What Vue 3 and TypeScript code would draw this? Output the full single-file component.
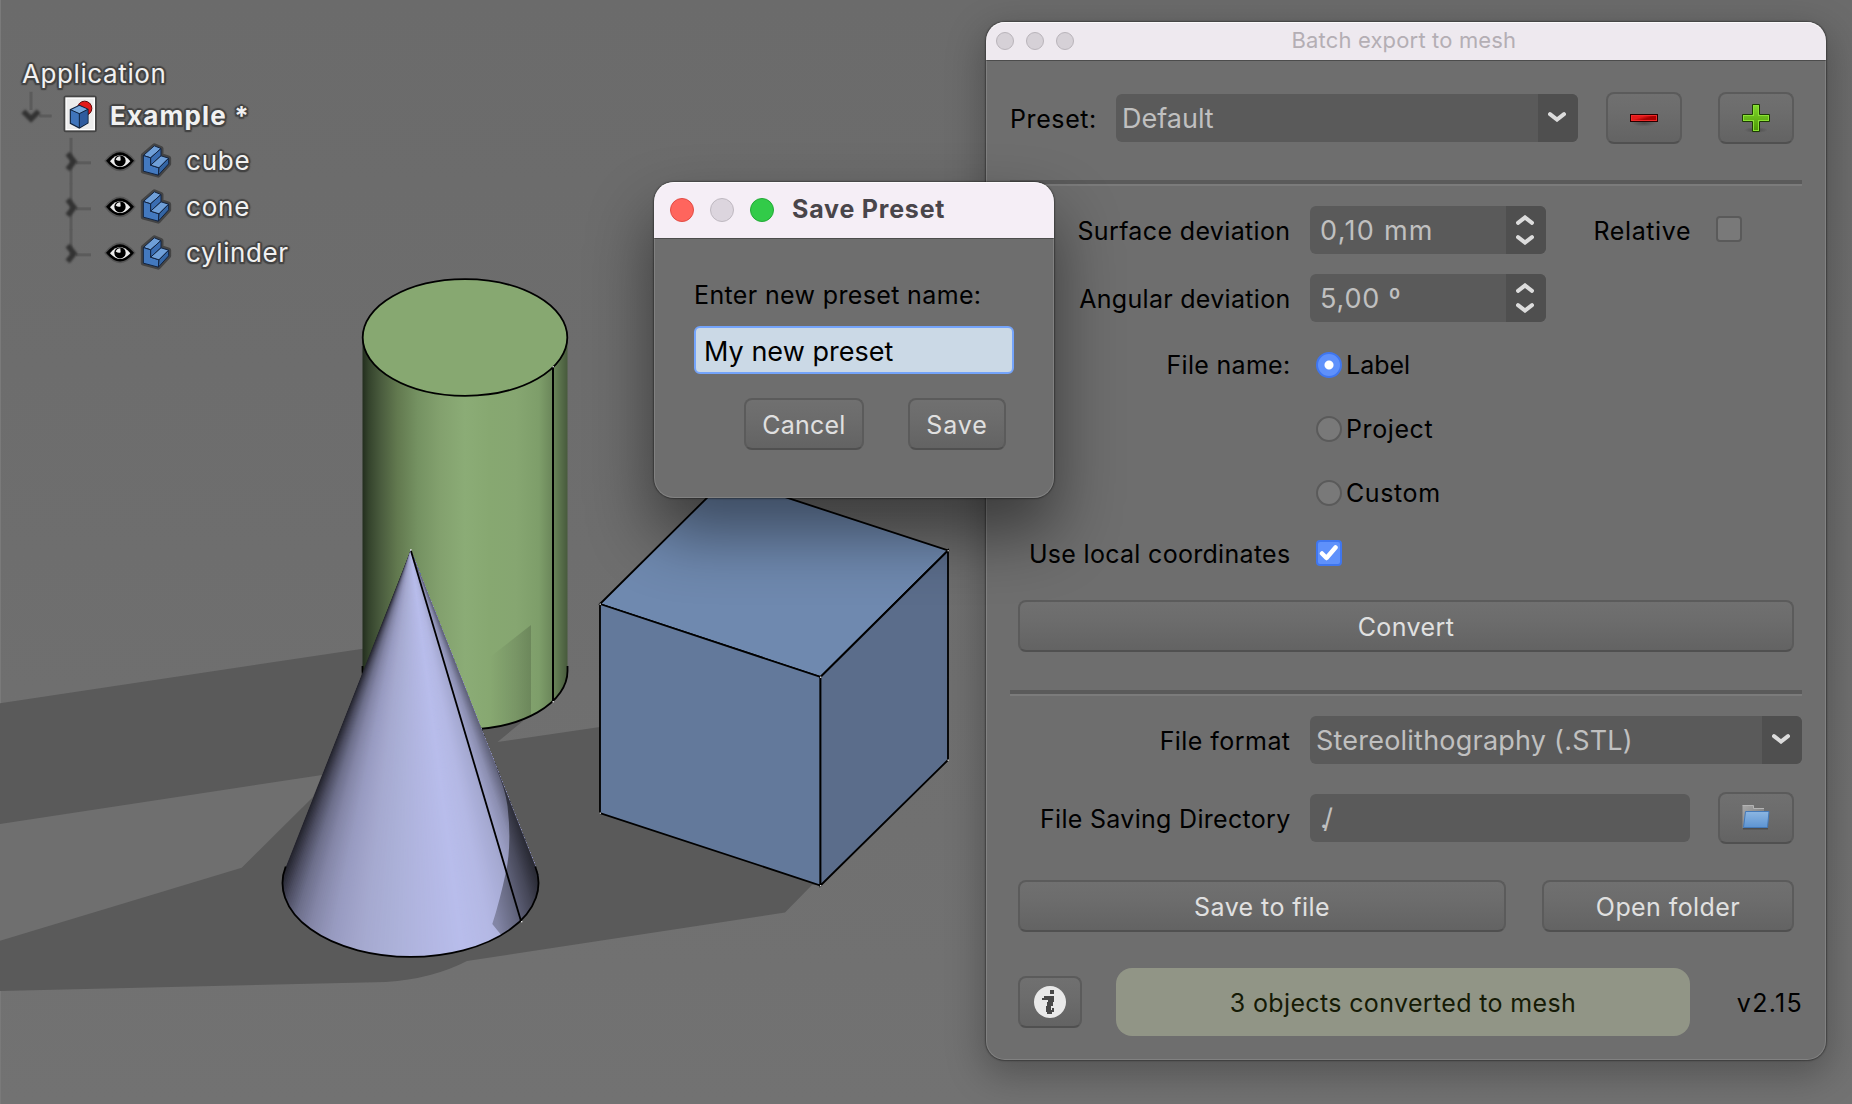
<script setup lang="ts">
import { ref } from 'vue'

interface TreeItem {
  name: string
  spacing: string
}

interface Slice {
  points: string
  fill: string
}

const treeItems: TreeItem[] = [
  { name: 'cube', spacing: 'ls-8' },
  { name: 'cone', spacing: 'ls-8' },
  { name: 'cylinder', spacing: 'ls-6' },
]

const presetName = ref('My new preset')
const directory = ref('./')

// Lambert-like shading of the cone, from its left silhouette to its right one
const shades: [number, number[]][] = [
  [0, [36, 36, 46]],
  [0.05, [76, 77, 97]],
  [0.1, [108, 110, 138]],
  [0.16, [132, 134, 167]],
  [0.24, [152, 155, 192]],
  [0.34, [165, 169, 207]],
  [0.46, [173, 178, 218]],
  [0.56, [179, 183, 227]],
  [0.66, [184, 189, 235]],
  [0.76, [180, 184, 228]],
  [0.86, [164, 168, 208]],
  [0.93, [139, 142, 176]],
  [1, [92, 94, 117]],
]

function shadeAt(u: number): string {
  for (let i = 1; i < shades.length; i++) {
    const [u1, c1] = shades[i]
    const [u0, c0] = shades[i - 1]
    if (u <= u1) {
      const k = (u - u0) / (u1 - u0)
      return `rgb(${c0.map((v, n) => Math.round(v + (c1[n] - v) * k)).join(',')})`
    }
  }
  return 'rgb(92,94,117)'
}

const apex = { x: 410.7, y: 550 }
const sliceCount = 140
const coneSlices: Slice[] = Array.from({ length: sliceCount }, (_, i) => {
  const u = i / sliceCount
  const slope = (u - 0.5) * 249.6
  const x = apex.x + slope * 1.4
  const right = apex.x + 125 * 1.4
  const y = apex.y + 316.5 * 1.4
  return { points: `${apex.x},${apex.y} ${x},${y} ${right + 6},${y}`, fill: shadeAt(u) }
})

const corners = [
  [600, 604], [820.5, 677], [948, 550.5], [600, 813], [820.5, 885.5], [948, 760],
  [553, 366.5], [553, 701.5], [410.7, 549.5], [521.5, 921.5],
]
</script>

<template>
  <main class="viewport">
    <svg class="scene" width="1852" height="1104" viewBox="0 0 1852 1104">
      <defs>
        <linearGradient id="side" x1="362.5" x2="567.5" y1="0" y2="0" gradientUnits="userSpaceOnUse">
          <stop offset="0" stop-color="#232e1e" />
          <stop offset=".03" stop-color="#34432c" />
          <stop offset=".09" stop-color="#4a5c3e" />
          <stop offset=".17" stop-color="#62794f" />
          <stop offset=".27" stop-color="#759262" />
          <stop offset=".38" stop-color="#83a16e" />
          <stop offset=".5" stop-color="#8bac76" />
          <stop offset=".62" stop-color="#87a871" />
          <stop offset=".75" stop-color="#86a671" />
          <stop offset=".86" stop-color="#7e9e6a" />
          <stop offset=".93" stop-color="#6a8559" />
          <stop offset="1" stop-color="#475a3c" />
        </linearGradient>
        <linearGradient id="cast" x1="490" x2="531" y1="0" y2="0" gradientUnits="userSpaceOnUse">
          <stop offset="0" stop-color="#000" stop-opacity="0" />
          <stop offset="1" stop-color="#000" stop-opacity=".16" />
        </linearGradient>
        <linearGradient id="coneCast" x1="492" x2="538" y1="900" y2="890" gradientUnits="userSpaceOnUse">
          <stop offset="0" stop-color="#000" stop-opacity=".26" />
          <stop offset="1" stop-color="#000" stop-opacity=".58" />
        </linearGradient>
        <clipPath id="cylBody">
          <path d="M362.5 337.5V671A102.5 58.5 0 0 0 567.5 671V337.5Z" />
        </clipPath>
        <clipPath id="coneBody">
          <path d="M410.7 550L285.7 866.5A128 74 0 1 0 535.5 866.5Z" />
        </clipPath>
      </defs>

      <!-- shadows on the ground -->
      <path fill="#5a5a5a" d="M0 703.3L363 648.7L470 700L523 721L497.5 742L600 727L820 885L812 885L785 912.5L467 961Q432 979 386 982L0 991Z" />
      <path fill="#6f6f6f" d="M0 824L322 775L313 797L241.7 867.7L0 940.7Z" />

      <!-- cylinder -->
      <path fill="url(#side)" d="M362.5 337.5V671A102.5 58.5 0 0 0 567.5 671V337.5Z" />
      <path fill="url(#cast)" clip-path="url(#cylBody)" d="M490 657L531 625V740H490Z" />
      <path class="edge" d="M362.5 666V671A102.5 58.5 0 0 0 567.5 671V666" />
      <path class="seam" d="M553 366V701" />
      <ellipse class="edge cap" cx="465" cy="337.5" rx="102.3" ry="58.3" />

      <!-- cone -->
      <g clip-path="url(#coneBody)">
        <polygon v-for="(slice, i) in coneSlices" :key="i" :points="slice.points" :fill="slice.fill" />
        <path fill="url(#coneCast)" d="M496 768Q505 788 507.500 806Q512 845 505.700 873Q500 900 492.300 924L502 936L545 940V860Z" />
      </g>
      <path class="edge" d="M285.7 866.5A128 74 0 1 0 535.3 866.5" />
      <path class="edge" d="M411 551L521 921" />

      <!-- cube -->
      <path class="edge face-top" d="M600 604L727 478L948 550.500L820.500 677Z" />
      <path class="edge face-front" d="M600 604L820.500 677V885.500L600 813Z" />
      <path class="edge face-right" d="M820.500 677L948 550.500V760L820.500 885.500Z" />

      <rect v-for="(c, i) in corners" :key="i" class="corner" :x="c[0] - 0.5" :y="c[1] - 0.5" width="1.4" height="1.4" />
    </svg>

    <nav class="tree">
      <div class="root-label ls-6">Application</div>
      <div class="document">
        <svg class="art" width="111" height="37" viewBox="0 168 333 111">
          <g class="branch"><path d="M93 155V210M118 228H155" /></g>
          <path class="chevron" d="M70 214L93 237L116 214" />
          <rect class="halo" x="198" y="174" width="85" height="95" />
          <rect x="198" y="174" width="85" height="95" fill="#ececec" stroke="#fff" stroke-width="4" />
          <circle cx="254" cy="205" r="21.500" fill="#e21a1a" stroke="#5e0707" stroke-width="3" />
          <path d="M238 196L264 208V249L238 264L211 250V209Z" fill="#3f74bb" stroke="#10233f" stroke-width="3.500" />
          <path d="M238 198L261 208L238 220L214 210Z" fill="#79a8dc" />
          <path d="M238 221L262 210V248L238 262Z" fill="#2f5b9e" />
          <path d="M211 209L238 221L264 208M238 221V264" fill="none" stroke="#10233f" stroke-width="3" />
        </svg>
        <span class="ls-12">Example *</span>
      </div>
      <div v-for="(item, i) in treeItems" :key="item.name" class="item">
        <svg class="art" width="186" height="46" viewBox="0 292.5 558 138">
          <g class="branch">
            <path :d="i === treeItems.length - 1 ? 'M213 290V367' : 'M213 292V431'" />
            <path d="M228 367H273" />
          </g>
          <path class="chevron" d="M203 339L222 363L203 387" />
          <path class="eye-halo" d="M318 361Q360 307 402 361Q360 415 318 361Z" />
          <path d="M318 361Q360 309 402 361Q360 413 318 361Z" fill="#000" />
          <path d="M330 362Q360 325 391 362Q360 397 330 362Z" fill="#ececec" />
          <circle cx="360" cy="361" r="17" fill="#000" />
          <path d="M347 357Q351 347 361 347L362 359Q356 363 347 357Z" fill="#ececec" />
          <path class="halo" d="M430 345L463 316L483 324V345L506 353V370L475 404L430 392Z" />
          <g stroke="#12233f" stroke-width="3" stroke-linejoin="round">
            <path d="M430 345L463 316L483 324L452 352Z" fill="#6f9fd8" />
            <path d="M430 345L452 352V374L477 382L475 404L430 392Z" fill="#4379bf" />
            <path d="M452 352L483 324V346L452 374Z" fill="#3a6db2" />
            <path d="M452 374L483 346L506 353L477 382Z" fill="#6f9fd8" />
            <path d="M477 382L506 353V370L475 404Z" fill="#3465a4" />
          </g>
        </svg>
        <span :class="item.spacing">{{ item.name }}</span>
      </div>
    </nav>

    <section class="window main">
      <header class="titlebar">
        <i class="light" /><i class="light" /><i class="light" />
        <span class="caption">Batch export to mesh</span>
      </header>
      <div class="body">
        <div class="row preset-row">
          <label class="ls-6">Preset:</label>
          <div class="field combo preset">
            <span>Default</span>
            <span class="drop">
              <svg width="18" height="10" viewBox="0 0 18 10"><path d="M2 2.200L9 7.600L16 2.200" /></svg>
            </span>
          </div>
          <button class="btn square">
            <svg width="30" height="30" viewBox="0 0 30 30">
              <defs>
                <linearGradient id="red" x1="0" y1="0" x2="1" y2=".5">
                  <stop offset=".4" stop-color="#e41a1a" /><stop offset=".75" stop-color="#a80000" />
                </linearGradient>
                <radialGradient id="soft"><stop offset="0" stop-opacity=".28" /><stop offset="1" stop-opacity="0" /></radialGradient>
              </defs>
              <ellipse cx="15" cy="20" rx="13" ry="3.500" fill="url(#soft)" />
              <rect x="1.500" y="11.500" width="27" height="7" fill="#ef2929" stroke="#280000" />
              <rect x="3" y="13" width="24" height="4" fill="url(#red)" />
            </svg>
          </button>
          <button class="btn square">
            <svg width="30" height="30" viewBox="0 0 30 30">
              <defs>
                <linearGradient id="green" x1="0" y1="0" x2="0" y2="1">
                  <stop offset="0" stop-color="#7fd62c" /><stop offset="1" stop-color="#4e9a06" />
                </linearGradient>
              </defs>
              <ellipse cx="15" cy="27" rx="12" ry="3" fill="url(#soft)" />
              <path d="M11.500 1.500H18.500V11.500H28.500V18.500H18.500V28.500H11.500V18.500H1.500V11.500H11.500Z" fill="#8ae234" stroke="#1c3a04" />
              <path d="M13 3H17V13H27V17H17V27H13V17H3V13H13Z" fill="url(#green)" />
            </svg>
          </button>
        </div>

        <hr class="rule rule-a" />

        <div class="row r-spin">
          <label class="name drop1">Surface deviation</label>
          <div class="field spin ls-13">
            <span>0,10 mm</span>
            <span class="drop stack">
              <svg width="18" height="10" viewBox="0 0 18 10"><path d="M2 7.800L9 2.400L16 7.800" /></svg>
              <svg width="18" height="10" viewBox="0 0 18 10"><path d="M2 2.200L9 7.600L16 2.200" /></svg>
            </span>
          </div>
          <label class="relative drop1 ls-6">Relative</label>
          <span class="check" />
        </div>
        <div class="row r-spin">
          <label class="name drop1 ls-3">Angular deviation</label>
          <div class="field spin ls-8">
            <span>5,00 º</span>
            <span class="drop stack">
              <svg width="18" height="10" viewBox="0 0 18 10"><path d="M2 7.800L9 2.400L16 7.800" /></svg>
              <svg width="18" height="10" viewBox="0 0 18 10"><path d="M2 2.200L9 7.600L16 2.200" /></svg>
            </span>
          </div>
        </div>
        <div class="row r-radio first">
          <label class="name ls-3">File name:</label>
          <span class="radio on" /><span class="option ls-0">Label</span>
        </div>
        <div class="row r-radio">
          <span class="name" /><span class="radio" /><span class="option ls-6">Project</span>
        </div>
        <div class="row r-radio">
          <span class="name" /><span class="radio" /><span class="option ls-6">Custom</span>
        </div>
        <div class="row r-check">
          <label class="name drop1 ls-3">Use local coordinates</label>
          <span class="check on">
            <svg width="20" height="18" viewBox="0 0 20 18"><path d="M3 9.500L7.500 14L16.500 3.500" /></svg>
          </span>
        </div>
        <div class="row r-convert"><button class="btn wide">Convert</button></div>

        <hr class="rule rule-b" />

        <div class="row r-format">
          <label class="name drop1 ls-5">File format</label>
          <div class="field combo grow">
            <span class="ls-2">Stereolithography (.STL)</span>
            <span class="drop">
              <svg width="18" height="10" viewBox="0 0 18 10"><path d="M2 2.200L9 7.600L16 2.200" /></svg>
            </span>
          </div>
        </div>
        <div class="row r-dir">
          <label class="name drop1 ls-3">File Saving Directory</label>
          <div class="field path"><span class="slash">{{ directory }}</span></div>
          <button class="btn square">
            <svg width="30" height="28" viewBox="0 0 30 28">
              <defs>
                <linearGradient id="blue" x1="0" y1="0" x2="0" y2="1">
                  <stop offset="0" stop-color="#8cb6e2" /><stop offset="1" stop-color="#5d94d2" />
                </linearGradient>
                <linearGradient id="grey" x1="0" y1="0" x2="1" y2="1">
                  <stop offset="0" stop-color="#a8a8a8" /><stop offset="1" stop-color="#6f6f6f" />
                </linearGradient>
              </defs>
              <path d="M2 24.500H27" stroke="#3c3c3c" stroke-opacity=".6" stroke-width="2" />
              <path d="M1.500 1.500H12.500V4.500H23V12L3 24H1.500Z" fill="url(#grey)" />
              <path d="M1.500 1.500H12.500V4.500H23" fill="none" stroke="#b4b4b4" />
              <path d="M4.500 7.500H28L26.500 23.500H2.500Z" fill="url(#blue)" stroke="#4479b8" />
            </svg>
          </button>
        </div>
        <div class="row r-save">
          <button class="btn save">Save to file</button>
          <button class="btn open">Open folder</button>
        </div>
        <div class="row r-foot">
          <button class="btn info">
            <svg width="32" height="32" viewBox="0 0 32 32">
              <circle cx="16" cy="16" r="16" fill="#e9e9e9" />
              <g fill="#484848" shape-rendering="crispEdges">
                <rect x="16" y="4" width="4" height="4" />
                <path d="M8 12H10V10H20V16H19V20H17V24H18V22H20V26H18V28H13V26H12V20H13V16H14V14H8Z" />
              </g>
            </svg>
          </button>
          <div class="status">3 objects converted to mesh</div>
          <span class="version drop1 ls-13">v2.15</span>
        </div>
      </div>
    </section>

    <section class="window dialog">
      <header class="titlebar">
        <i class="light red" /><i class="light" /><i class="light green" />
        <span class="caption ls-8">Save Preset</span>
      </header>
      <div class="body">
        <label class="prompt">Enter new preset name:</label>
        <div class="entry">{{ presetName }}</div>
        <div class="actions">
          <button class="btn cancel ls-2">Cancel</button>
          <button class="btn ok ls-9">Save</button>
        </div>
      </div>
    </section>
  </main>
</template>

<style>
body {
  margin: 0;
}
</style>

<style scoped>
.viewport {
  position: relative;
  width: 1852px;
  height: 1104px;
  overflow: hidden;
  box-sizing: border-box;
  background: linear-gradient(#6b6b6b, #6e6e6e 50%, #727272);
  box-shadow: inset 1px 0 #7a7a7a;
  font: 25px/30px Inter, 'Liberation Sans', sans-serif;
  letter-spacing: 0.36px;
  color: #000;
  white-space: pre;
}
.viewport *,
.viewport *::after {
  box-sizing: border-box;
}
.scene {
  position: absolute;
  inset: 0;
}
.edge {
  fill: none;
  stroke: #000;
  stroke-width: 1.8;
}
.seam {
  stroke: #000;
  stroke-width: 2;
}
.cap { fill: #87a871; }
.face-top { fill: #6f89af; }
.face-front { fill: #63799b; }
.face-right { fill: #5b6d8b; }
.corner { fill: #ddd; }

.ls-0 { letter-spacing: 0; }
.ls-2 { letter-spacing: 0.22px; }
.ls-3 { letter-spacing: 0.3px; }
.ls-5 { letter-spacing: 0.45px; }
.ls-6 { letter-spacing: 0.6px; }
.ls-8 { letter-spacing: 0.8px; }
.ls-9 { letter-spacing: 0.9px; }
.ls-12 { letter-spacing: 1.2px; }
.ls-13 { letter-spacing: 1.3px; }

/* optical centring of a label beside a taller control */
.drop1 {
  padding-top: 2px;
}

/* model tree */
.tree {
  position: relative;
  padding-top: 50px;
  font-size: 26px;
  color: #f1f1f1;
  text-shadow: 2px 0 1px #444, -2px 0 1px #444, 0 2px 1px #444, 0 -2px 1px #444, 1.5px 1.5px 1px #444,
    -1.5px 1.5px 1px #444, 1.5px -1.5px 1px #444, -1.5px -1.5px 1px #444;
}
.root-label {
  height: 46px;
  padding-left: 22px;
  line-height: 47px;
}
.document {
  display: flex;
  align-items: center;
  height: 37px;
  margin-bottom: 4.5px;
  font-weight: 700;
  line-height: 37px;
}
.item {
  display: flex;
  align-items: center;
  height: 46px;
  line-height: 46px;
}
.art {
  overflow: visible;
  flex: none;
}
.document .art + span {
  margin-left: -1px;
  padding-top: 1px;
}
.item .art + span {
  padding-top: 1px;
}
.branch {
  fill: none;
  stroke: #5b5b5b;
  stroke-width: 9;
  filter: blur(1.5px);
}
.chevron {
  fill: none;
  stroke: #333;
  stroke-width: 16;
  filter: blur(3px);
}
.halo {
  fill: #444;
  stroke: #444;
  stroke-width: 15;
  stroke-linejoin: round;
}
.eye-halo {
  fill: #444;
  stroke: #555;
  stroke-width: 8;
}

/* windows */
.window {
  position: absolute;
  display: flex;
  flex-direction: column;
  overflow: visible;
  background: #6e6e6e;
}
.window::after {
  content: '';
  position: absolute;
  inset: 0;
  border-radius: inherit;
  border: 1px solid rgba(255, 255, 255, 0.14);
  border-top-color: rgba(255, 255, 255, 0.7);
  pointer-events: none;
}
.main {
  left: 986px;
  top: 22px;
  width: 840px;
  height: 1038px;
  border-radius: 19px;
  box-shadow: 0 0 1.5px 1px rgba(0, 0, 0, 0.35), 0 12px 36px 4px rgba(0, 0, 0, 0.25);
}
.dialog {
  left: 654px;
  top: 182px;
  width: 400px;
  height: 316px;
  border-radius: 20px;
  box-shadow: 0 0 1.5px 1px rgba(0, 0, 0, 0.35), 0 34px 64px 2px rgba(0, 0, 0, 0.46);
}
.titlebar {
  display: flex;
  align-items: center;
  flex: none;
  background: #eee9ef;
  border-bottom: 1px solid #4c4c4c;
}
.main .titlebar {
  height: 39px;
  padding-left: 10px;
  gap: 12px;
  border-radius: 19px 19px 0 0;
}
.dialog .titlebar {
  height: 57px;
  padding-left: 16px;
  gap: 16px;
  border-radius: 20px 20px 0 0;
  background: #f5eef6;
}
.light {
  flex: none;
  width: 18px;
  height: 18px;
  border-radius: 50%;
  background: #d6d1d7;
  border: 1px solid #b9b4ba;
}
.dialog .light {
  width: 24px;
  height: 24px;
  background: #dcd5de;
  border-color: #bfb9c1;
}
.dialog .light.red {
  background: #ff655d;
  border-color: #e24b44;
}
.dialog .light.green {
  background: #32cb49;
  border-color: #22aa36;
}
.main .caption {
  margin-left: 205.5px;
  padding-bottom: 2px;
  font-size: 22px;
  letter-spacing: 0.16px;
  color: #b4aeb4;
}
.dialog .caption {
  margin: -2px 0 0 2px;
  font-weight: 700;
  color: #49454a;
}

.row {
  display: flex;
  align-items: center;
}
.main .body {
  padding: 31px 24px 24px;
}
.name {
  flex: none;
  width: 280.5px;
  margin-right: 19.5px;
  text-align: right;
}

.field {
  display: flex;
  align-items: center;
  height: 48px;
  border-radius: 6px;
  background: #5a5a5a;
  color: #c0c0c0;
  font-size: 27px;
  overflow: hidden;
}
.field > span:first-child {
  padding-top: 2px;
}
.field .drop {
  display: flex;
  align-items: center;
  justify-content: center;
  flex: none;
  width: 40px;
  height: 48px;
  margin-left: auto;
  padding: 0 2px 2px 0;
  background: #4f4f4f;
}
.field .drop.stack {
  flex-direction: column;
  gap: 10px;
  padding: 0 2px 0 0;
}
.drop svg {
  flex: none;
}
.drop path {
  fill: none;
  stroke: #dcdcdc;
  stroke-width: 4;
  stroke-linecap: round;
}
.combo {
  padding-left: 6px;
  letter-spacing: 0;
}
.spin {
  width: 236px;
  padding-left: 10px;
}

.btn {
  display: flex;
  align-items: center;
  justify-content: center;
  flex: none;
  height: 52px;
  margin: 0;
  padding: 2px 0 0;
  border: 2px solid #5b5b5b;
  border-bottom-color: #505050;
  border-radius: 8px;
  background: linear-gradient(#707070, #6c6c6c 40%, #636363);
  color: #e0e0e0;
  font-family: inherit;
  font-size: 25px;
  line-height: 30px;
  letter-spacing: 0.42px;
}
.btn.ls-2 { letter-spacing: 0.22px; }
.btn.ls-9 { letter-spacing: 0.9px; }
.square {
  width: 76px;
}
.btn.square,
.btn.info {
  padding: 0;
}

.preset-row {
  height: 52px;
}
.preset-row label {
  width: 106px;
  padding-top: 2px;
}
.preset {
  width: 462px;
}
.preset + .btn { margin-left: 28px; }
.preset ~ .btn + .btn { margin-left: 36px; }

.rule {
  height: 6px;
  margin: 36px 0 20px;
  border: 0;
  background: linear-gradient(#5a5a5a 4px, #7b7b7b 4px);
}
.rule-b {
  margin-top: 38px;
}

.r-spin {
  height: 48px;
  margin-bottom: 20px;
}
.relative {
  margin-left: 47.5px;
  width: 122.5px;
}
.check {
  display: flex;
  align-items: center;
  justify-content: center;
  width: 26px;
  height: 26px;
  margin-top: -2px;
  border: 2px solid #5a5a5a;
  border-radius: 4px;
  background: #797979;
}
.check.on {
  margin: 0 0 0 6px;
  border-color: #3f76ef;
  background: #5f91fb;
}
.check path {
  fill: none;
  stroke: #fff;
  stroke-width: 4.5;
  stroke-linecap: round;
  stroke-linejoin: round;
}
.r-radio {
  height: 26px;
  margin-bottom: 38px;
}
.r-radio.first {
  margin-top: 30px;
}
.radio {
  width: 26px;
  height: 26px;
  margin: 0 4px 0 6px;
  border: 2px solid #5a5a5a;
  border-radius: 50%;
  background: #797979;
}
.radio.on {
  border-color: #3f76ef;
  background: radial-gradient(circle, #fff 4px, #5f91fb 5px);
}
.r-check {
  height: 26px;
  margin-top: -4px;
}
.r-convert {
  margin-top: 34px;
  padding: 0 8px;
}
.wide {
  width: 776px;
}
.r-format {
  height: 48px;
}
.grow {
  flex: 1;
}
.r-dir {
  height: 52px;
  margin-top: 28px;
}
.path {
  width: 380px;
  margin-right: 28px;
  padding-left: 10px;
}
.slash {
  letter-spacing: -4.5px;
}
.r-save {
  margin-top: 36px;
  padding-left: 8px;
}
.save {
  width: 488px;
  margin-right: 36px;
}
.open {
  width: 252px;
}
.r-foot {
  height: 68px;
  margin-top: 36px;
  padding-left: 8px;
}
.info {
  width: 64px;
}
.status {
  width: 574px;
  height: 68px;
  margin-left: 34px;
  border-radius: 16px;
  background: #919586;
  color: #151a05;
  line-height: 71px;
  text-align: center;
}
.version {
  margin-left: auto;
  margin-right: -1px;
}

.dialog .body {
  display: flex;
  flex-direction: column;
  padding: 41px 40px 0;
}
.prompt {
  line-height: 30px;
}
.entry {
  height: 48px;
  margin-top: 16px;
  padding-left: 8px;
  border: 2px solid #74a4fb;
  border-radius: 6px;
  background: #cbd9e6;
  font-size: 27px;
  line-height: 47px;
  letter-spacing: 0.03px;
}
.actions {
  display: flex;
  gap: 44px;
  margin: 24px 0 0 50px;
}
.cancel {
  width: 120px;
}
.ok {
  width: 98px;
}
</style>
